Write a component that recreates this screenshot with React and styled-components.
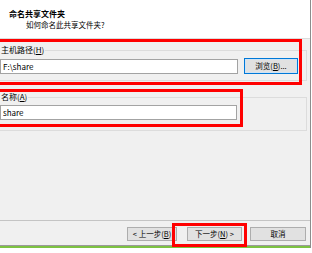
import React from "react";
import styled, { createGlobalStyle } from "styled-components";

const Global = createGlobalStyle`
    html, body {
        margin: 0;
        padding: 0;
        background: #fff;
        width: 312px;
        height: 253px;
        overflow: hidden;
    }
    body {
        font-family: "Noto Sans CJK SC", "Liberation Sans", sans-serif;
        font-size: 8px;
        color: #000;
    }
`;

function App() {
    return (
        <Frame>
            <Global />
            <Main>
                <Header>
                    <Title>命名共享文件夹</Title>
                    <Subtitle>如何命名此共享文件夹?</Subtitle>
                </Header>
                <Body>
                    <Group $gapTop={6} $padBottom={6}>
                        <Legend>
                            主机路径(<u>H</u>)
                        </Legend>
                        <Row>
                            <Field $width={238} value="F:\share" readOnly />
                            <Button $width={54} $focused>
                                浏览(<u>B</u>)...
                            </Button>
                        </Row>
                    </Group>
                    <Group $gapTop={11} $padBottom={10}>
                        <Legend>
                            名称(<u>A</u>)
                        </Legend>
                        <Row>
                            <Field $width={237} value="share" readOnly />
                        </Row>
                    </Group>
                    <Footer>
                        <Button $width={50}>&lt; 上一步(<u>B</u>)</Button>
                        <Button $width={55} $gap={10}>
                            下一步(<u>N</u>) &gt;
                        </Button>
                        <Button $width={56} $gap={8}>
                            取消
                        </Button>
                    </Footer>
                </Body>
                <Accent />
            </Main>
            <Mark $x={-5} $y={39} $w={307} $h={46} />
            <Mark $x={-5} $y={89} $w={248} $h={38} />
            <Mark $x={172} $y={223} $w={75} $h={24} />
        </Frame>
    );
}

export default App;

const Frame = styled.div`
    position: relative;
    width: 312px;
    height: 253px;
    overflow: hidden;
`;

const Main = styled.div`
    width: 310px;
    border-right: 1px solid #8c8c8c;
    display: flex;
    flex-direction: column;
`;

const Header = styled.div`
    height: 39px;
    background: #fff;
    border-bottom: 1px solid #dcdcdc;
    box-sizing: border-box;
    padding: 9px 0 0 9px;
    display: flex;
    flex-direction: column;
    gap: 1px;
`;

const Title = styled.div`
    font-weight: bold;
    line-height: 10px;
    font-size: 8px;
`;

const Subtitle = styled.div`
    line-height: 10px;
    padding-left: 17px;
    font-size: 7.5px;
`;

const Body = styled.div`
    height: 206px;
    background: #f0f0f0;
    display: flex;
    flex-direction: column;
    border-bottom: 1px solid #9a9a9a;
`;

const Group = styled.fieldset`
    margin: ${(p) => p.$gapTop}px 0 0 -7px;
    width: 314px;
    box-sizing: border-box;
    border: 1px solid #dcdcdc;
    padding: 3px 8px ${(p) => p.$padBottom}px 6px;
    min-width: 0;
`;

const Legend = styled.legend`
    padding: 0 1px;
    line-height: 10px;
    font-size: 8px;
    color: #000;
`;

const Row = styled.div`
    display: flex;
    align-items: center;
    justify-content: space-between;
`;

const Field = styled.input`
    width: ${(p) => p.$width}px;
    height: 15px;
    box-sizing: border-box;
    border: 1px solid #a3a3a3;
    background: #fff;
    padding: 0 2px;
    font-family: "Noto Sans CJK SC", "Liberation Sans", sans-serif;
    font-size: 8px;
    color: #000;
    outline: none;
`;

const Button = styled.div`
    width: ${(p) => p.$width}px;
    height: ${(p) => (p.$focused ? 16 : 14)}px;
    margin-left: ${(p) => p.$gap || 0}px;
    box-sizing: border-box;
    border: 1px solid ${(p) => (p.$focused ? "#0078d7" : "#adadad")};
    box-shadow: ${(p) => (p.$focused ? "inset 0 0 0 1px #cfe3f5" : "none")};
    background: #e1e1e1;
    display: flex;
    align-items: center;
    justify-content: center;
    font-size: 7.5px;
    line-height: 1;
    white-space: nowrap;
    color: #000;
`;

const Footer = styled.div`
    margin-top: auto;
    border-top: 1px solid #c4c4c4;
    padding: 6px 4px 4px 0;
    display: flex;
    justify-content: flex-end;
`;

const Accent = styled.div`
    height: 2px;
    background: #7dc242;
`;

const Mark = styled.div`
    position: absolute;
    left: ${(p) => p.$x}px;
    top: ${(p) => p.$y}px;
    width: ${(p) => p.$w}px;
    height: ${(p) => p.$h}px;
    box-sizing: border-box;
    border: 3px solid #ff0000;
    pointer-events: none;
`;
